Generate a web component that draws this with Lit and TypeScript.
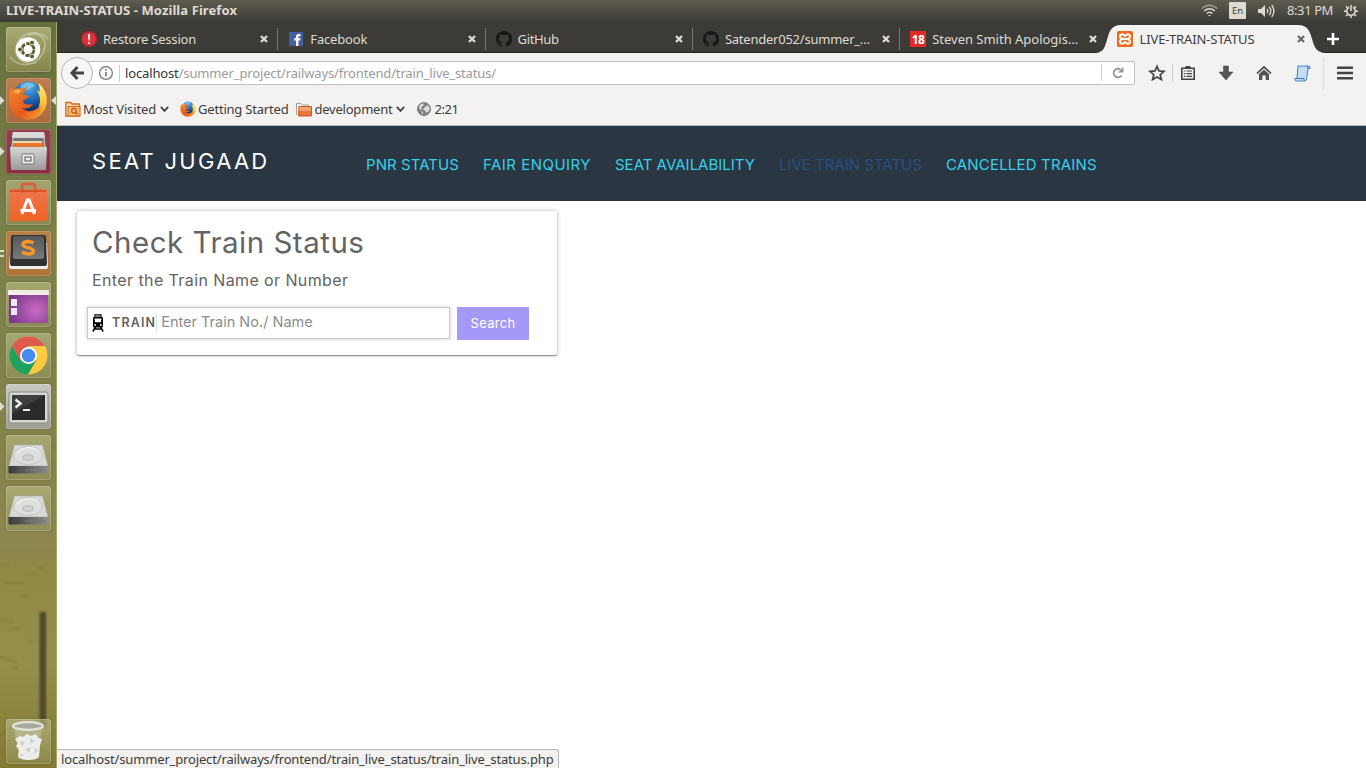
import { LitElement, html, css, svg } from "lit";
import { customElement } from "lit/decorators.js";

const octocat = svg`<path fill="#181716" d="M8 0C3.58 0 0 3.58 0 8c0 3.54 2.29 6.53 5.47 7.59.4.07.55-.17.55-.38v-1.49c-2.01.37-2.53-.49-2.69-.94-.09-.23-.48-.94-.82-1.13-.28-.15-.68-.52-.01-.53.63-.01 1.08.58 1.23.82.72 1.21 1.87.87 2.33.66.07-.52.28-.87.51-1.07-1.78-.2-3.64-.89-3.64-3.95 0-.87.31-1.59.82-2.15-.08-.2-.36-1.02.08-2.12 0 0 .67-.21 2.2.82a7.6 7.6 0 0 1 4 0c1.53-1.04 2.2-.82 2.2-.82.44 1.1.16 1.92.08 2.12.51.56.82 1.27.82 2.15 0 3.07-1.87 3.75-3.65 3.95.29.25.54.73.54 1.48v2.2c0 .21.15.46.55.38A8 8 0 0 0 16 8c0-4.42-3.58-8-8-8z"/>`;

const fox = svg`
  <circle cx="20.500" cy="17" r="15.500" fill="url(#globe)"/>
  <path fill="#8fd0f2" opacity=".6" d="M13 5c5-3 11-3 14 0-1 3-4 2-5 4-2 1-3 2-6 1-2-1-4-2-3-5z"/>
  <path fill="url(#tail)" d="M30 3C37 8 40 16 38.500 24 37 33 30 39 20 39.500 27 36 31 31 31 26 33 20 32 15 28.500 10L31.500 12C32 9 31.500 6 30 3z"/>
  <path fill="url(#fire)" d="M3 6C3 8 3.500 9 5 10 8 8 12 8 14 9L19 7C18 11 16 13 14 14L21 16C20 19 16 19 15 21 16 25 20 25 25 24 22 28.500 18 29 14 28 19 33 28 32 32.500 25 34 33 27 39.500 20 39.500 9 39.500 1 31 1 20 1 14 2 9 3 6z"/>
  <path fill="#f9b04a" d="M5 12c3-3 6-3 9-2-2 1-3 2-3 4-2-1-4-1-6-2z"/>`;

const TABS = [
  { t: "Restore Session", k: "t1", icon: svg`<circle cx="8" cy="8" r="8" fill="#d8323a"/><circle cx="8" cy="8" r="7.4" fill="none" stroke="#9e1b24"/><path d="M7 3h2l-.4 6.5H7.4z" fill="#fff"/><circle cx="8" cy="12" r="1.1" fill="#fff"/>` },
  { t: "Facebook", k: "t2", icon: svg`<rect x="1" y="1" width="14" height="14" fill="#4560a0"/><path fill="#fff" d="M8 15V9.5H6.3V7.3H8V5.8C8 3.9 9.1 3 10.7 3h1.8v2.2h-1.1c-.8 0-1 .4-1 1v1.1h2.1l-.3 2.2h-1.8V15z"/>` },
  { t: "GitHub", k: "t3", icon: octocat },
  { t: "Satender052/summer_…", k: "t4", icon: octocat },
  { t: "Steven Smith Apologis…", k: "t5", icon: svg`<rect width="16" height="16" fill="#e32a23"/><text x="8" y="12.6" class="n18" text-anchor="middle">18</text>` },
  { t: "LIVE-TRAIN-STATUS", k: "t6", icon: svg`<rect width="16" height="16" rx="1.500" fill="#ee6b1c"/><path fill="none" stroke="#fff" stroke-width="2" d="M6 8C1 7 3 2.500 6 3.500L8 5l2-1.500c3-1 5 3.500 0 4.500 5 1 3 5.500 0 4.500L8 11l-2 1.500C3 13.500 1 9 6 8zM6 8h4"/>` },
];

const NAV: [string, string][] = [
  ["PNR STATUS", "n1"], ["FAIR ENQUIRY", "n2"], ["SEAT AVAILABILITY", "n3"],
  ["LIVE TRAIN STATUS", "n4"], ["CANCELLED TRAINS", "n5"],
];

const disk = svg`
  <path d="M8.500 10h28L42 31H3z" fill="#d9d9d7" stroke="#a9a9a6" stroke-width=".6"/>
  <path d="M2.500 31h40v6.500q0 1-1 1h-38q-1 0-1-1z" fill="url(#dk)"/>
  <ellipse cx="22" cy="20.500" rx="14.500" ry="9" fill="#dfdfdd" stroke="#bcbcba" stroke-width=".8"/>
  <ellipse cx="22" cy="22.500" rx="5.500" ry="2.800" fill="#d2d2d0" stroke="#aaa" stroke-width=".8"/>
  <path d="M11 18c5-6 15-7 21-3" stroke="#f4f4f4" fill="none" stroke-width="1.200"/><path d="M19 35h22" stroke="#777" stroke-dasharray="1 1" stroke-width="2"/>`;

const LAUNCH = [
  { c: "olive", l: "", icon: svg`<path d="M4 30C14 42 34 40 39 20 40 10 32 5 22 8M42 12C32 2 14 4 10 20c-2 12 8 18 20 16" stroke="#fff" stroke-width="1.500" opacity=".35" fill="none"/><circle cx="22" cy="22.500" r="12.200" fill="#fdfdfb"/><circle cx="22" cy="22.500" r="6" fill="none" stroke="#5d5a30" stroke-width="2.800" stroke-dasharray="11.200 1.360" stroke-dashoffset="-.7"/><g fill="#5d5a30" stroke="#fdfdfb" stroke-width=".8"><circle cx="14" cy="22.500" r="2.400"/><circle cx="26" cy="15.600" r="2.400"/><circle cx="26" cy="29.400" r="2.400"/></g>` },
  { c: "rust", l: "both", icon: svg`<g transform="translate(2 2)">${fox}</g>` },
  { c: "wine", l: "one", icon: svg`<path d="M7 3h31l2 17H5z" fill="#b9b9b7"/><path d="M8 4h29l1 14H7z" fill="#747472"/><path d="M7 3h31l1 6H6z" fill="#d9d9d7"/><path d="M8 14h29v5H7z" fill="#e5762d"/><path d="M7 12h29v2H7z" fill="#f4d9b8"/><path d="M4 18h37l-1 22q0 1-1 1H6q-1 0-1-1z" fill="url(#dr)"/><rect x="16" y="25" width="12" height="10" rx="1" fill="#ececea" stroke="#777"/><rect x="19" y="28" width="6" height="4" fill="none" stroke="#555"/>` },
  { c: "plain", l: "", icon: svg`<path d="M3 9h38v30q0 2-2 2H5q-2 0-2-2z" fill="url(#bag)"/><path d="M16 13V6q0-2 2-2h9q2 0 2 2v7" fill="none" stroke="#d9603f" stroke-width="3"/><path d="M4 11h36" stroke="#d35428" stroke-width="2"/><path d="M16 34l5.200-14h2L28.500 34M14.500 30.500h15.500" fill="none" stroke="#fff" stroke-width="3"/>` },
  { c: "amber", l: "two", icon: svg`<path d="M5 12h36l1 24q0 2-2 2H5q-2 0-2-2z" fill="#efefed"/><path d="M7 4h31q2 0 2 2l1 26q0 3-2 3H6q-2 0-2-3L5 6q0-2 2-2z" fill="#303133"/><rect x="7" y="5" width="31" height="23" rx="2" fill="url(#key)"/><path d="M27.500 12c-5-3-11-1-10.500 2s10.500 2.500 10.500 6-6.500 4-11.500 1" fill="none" stroke="#f5962b" stroke-width="3.400"/>` },
  { c: "plain", l: "", icon: svg`<rect x="3" y="9" width="39" height="32" rx="1.500" fill="url(#pur)"/><path d="M2 8h41v5H2z" fill="#f0eee4"/><path d="M5 17h6v7H5zM5 26h6v7H5z" fill="#f4e9f3"/>` },
  { c: "plain", l: "", icon: svg`<circle cx="22.500" cy="22.500" r="19" fill="#fbca43"/><path d="M22.500 13H39A19 19 0 0 0 6 13l8.300 14.200z" fill="#dd5a4e"/><path d="M6 13a19 19 0 0 0 16 28.500l8.300-14.300H22.500L14.300 27.200z" fill="#1fa05c"/><circle cx="22.500" cy="22.500" r="8.500" fill="#fff"/><circle cx="22.500" cy="22.500" r="6.800" fill="#4889f2"/>` },
  { c: "steel", l: "one", icon: svg`<rect x="3" y="8" width="39" height="31" rx="2" fill="#d4d4d1" stroke="#8c8c88"/><rect x="6" y="11" width="33" height="25" fill="#2b2c2a"/><path d="M6 11h33L6 30z" fill="#3d3f3c"/><path d="M9.500 15.500l5 4-5 4" fill="none" stroke="#eee" stroke-width="2.500"/><path d="M17 26h7" stroke="#eee" stroke-width="2"/>` },
  { c: "plain", l: "", icon: disk },
  { c: "plain", l: "", icon: disk },
];

const trash = svg`<path d="M8 8h28l-4 30q-1 3-9.500 3T13 38z" fill="#c9c9ba" opacity=".5"/><path d="M9 20l5-3 3 1 4-3 4 2 5-2 2 4 4 1-2 6-1 12q-3 3-10.500 3T12 38l1-7-3-4 2-3z" fill="#ededeb"/><path d="M14 22l5 1-3 5zM24 19l5 3-5 3zM19 30l6-2-2 6zM29 28l3 4-4 3zM14 34l4 2-3 2z" fill="#cfcfcb"/><ellipse cx="22" cy="7" rx="15" ry="3.800" fill="#aaa99a" stroke="#e3e3de" stroke-width="2.200"/>`;

@customElement("app-root")
export class AppRoot extends LitElement {
  static styles = css`
    :host { display: flex; flex-direction: column; position: relative; width: 1366px; height: 768px; overflow: hidden; background: #fff; font: 13px/18px "Noto Sans", "Open Sans", sans-serif; color: #3c3c3c; }
    * { box-sizing: border-box; }
    svg { display: block; flex: none; overflow: visible; }
    span { white-space: nowrap; }
    .panel { height: 22px; flex: none; display: flex; align-items: center; padding: 0 8px 0 6px; background: linear-gradient(#5e5b50, #3c3b37); color: #dfdbd2; }
    .title { font-weight: 700; letter-spacing: .087px; margin-top: -2px; }
    .tray { margin-left: auto; display: flex; align-items: center; margin-top: -1px; }
    .wifi { margin-right: 11px; }
    .lang { width: 17px; height: 17px; background: #dfdbd2; color: #3c3b37; font-size: 9.5px; line-height: 17px; text-align: center; border-radius: 1px; margin-right: 12px; }
    .vol { margin-right: 12px; }
    .clock { margin-right: 11px; letter-spacing: -.404px; margin-top: -1px; }
    .body { flex: 1; display: flex; min-height: 0; }
    .launcher { width: 57px; flex: none; display: flex; flex-direction: column; gap: 6px; padding: 5px 0 4px 6px; border-right: 1px solid #a5a765; background: url("data:image/svg+xml,%3Csvg xmlns='http://www.w3.org/2000/svg' width='57' height='746'%3E%3Cdefs%3E%3Cfilter id='b'%3E%3CfeGaussianBlur stdDeviation='.8'/%3E%3C/filter%3E%3C/defs%3E%3Cg filter='url(%23b)'%3E%3Crect x='39.500' y='590' width='6.500' height='115' fill='%23504b2b'/%3E%3Cpath d='M0 527h57' stroke='%23767340' opacity='.5'/%3E%3Cpath d='M0 543h9M24 552h12M4 561h20M38 546h8M0 597l14 3M8 608l12-2M28 620h6M0 635l17 5M12 646h6M20 574h9M0 712l16-8' stroke='%2376662e' stroke-width='2' fill='none' opacity='.4'/%3E%3Cpath d='M10 28q16 32 42 18' stroke='%23535f35' fill='none' stroke-width='4' opacity='.6'/%3E%3C/g%3E%3C/svg%3E"), linear-gradient(#66713f, #7b8049 28%, #85834c 60%, #8d884f 70%, #8f8a46 73%, #958f4b 86%, #817a33); }
    .slot { width: 45px; height: 45px; flex: none; position: relative; }
    .tile { width: 45px; height: 45px; border-radius: 3px; box-shadow: inset 0 0 0 1px #ffffff30, 0 0 2px #4d4d2780; background: linear-gradient(#c0c08c99, #9b9b6466); }
    .olive { background: linear-gradient(#a9aa74, #85864b); }
    .rust { background: linear-gradient(#bd7d50, #ad6b3d); }
    .wine { background: linear-gradient(#94404c, #87303f); }
    .amber { background: linear-gradient(#b98149, #ad7337); }
    .steel { background: linear-gradient(#c9c9c2, #9d9d94); }
    .mark { position: absolute; left: -6px; top: 18px; }
    .markr { position: absolute; right: -5px; top: 18px; }
    .bin { margin-top: auto; }
    .win { flex: 1; min-width: 0; display: flex; flex-direction: column; }
    .strip { height: 31px; flex: none; display: flex; padding-left: 14px; background: #3c3b37; border-bottom: 1px solid #2b2623; color: #dfdbd2; }
    .tab { width: 207.3px; height: 30px; flex: none; display: flex; align-items: center; padding: 4px 10px 0 10px; position: relative; }
    .tab svg, .tab span { position: relative; }
    .tab span { margin-left: 6px; }
    .tab .x { margin-left: auto; }
    .t1 { letter-spacing: -.214px; }
    .t2 { letter-spacing: -.16px; }
    .t3 { letter-spacing: -.365px; }
    .t4 { letter-spacing: -.233px; }
    .t5 { letter-spacing: -.012px; }
    .t6 { letter-spacing: -.102px; }
    .sep::after { content: ""; width: 1px; height: 22px; background: #7b7974; position: absolute; right: 0; top: 6px; }
    .on { color: #3c3c3c; }
    .tab .shape { position: absolute; left: -12px; top: 3px; }
    .plus { margin: 11px 0 0 12px; }
    .n18 { font: 700 12px "Open Sans", sans-serif; fill: #fff; letter-spacing: -.5px; }
    .bar { height: 41px; flex: none; display: flex; align-items: center; background: #f4f2f1; }
    .back { width: 32px; height: 32px; border: 1px solid #b9b6b2; border-radius: 50%; background: #f7f6f5; margin-left: 4px; margin-top: -1px; z-index: 1; display: grid; place-items: center; flex: none; }
    .url { width: 1053px; height: 24px; flex: none; margin: -1px 0 0 -11px; background: #fff; border: 1px solid #c3c0bd; display: flex; align-items: center; padding-left: 16px; border-radius: 0 2px 2px 0; color: #9b9b9b; }
    .url b { font-weight: 400; color: #333; }
    .addr { letter-spacing: -.141px; }
    .vl { width: 1px; height: 17px; background: #ccc; margin: 0 5px 0 6px; }
    .re { margin-left: auto; border-left: 1px solid #ccc; height: 16px; width: 33px; display: grid; place-items: center; }
    .tools { flex: 1; display: flex; align-items: center; padding-left: 14px; margin-top: -1px; }
    .g1 { width: 1px; height: 18px; background: #cfccc9; margin: 0 7px 0 7px; }
    .g2 { width: 1px; height: 33px; background: #dcd9d6; margin: 0 13px 0 12px; }
    .s1 { margin-left: 22px; }
    .marks { height: 31px; flex: none; display: flex; align-items: center; background: #f4f2f1; padding: 0 0 1px 8px; }
    .marks span { margin: -1px 4px 0 2px; }
    .marks .m2 { margin-right: 8px; letter-spacing: -.2px; }
    .marks .m4 { margin-left: 3px; letter-spacing: -.449px; }
    .m1 { letter-spacing: -.143px; }
    .m3 { letter-spacing: -.222px; }
    .mf { margin-left: 11px; }
    .mg { margin-left: 12px; }
    .page { flex: 1; background: #fff; font-family: "Inter", sans-serif; color: #636363; display: flex; flex-direction: column; align-items: flex-start; }
    .head { align-self: stretch; height: 76px; border-top: 1px solid #b5c0bb; background: #2b3643; display: flex; align-items: center; padding-left: 35px; }
    .brand { font-size: 22px; line-height: 30px; color: #fff; width: 274px; margin-bottom: 5px; letter-spacing: 2.28px; }
    .links { display: flex; gap: 24px; font-size: 15px; color: #35d0ea; padding-top: 2px; }
    .n1 { letter-spacing: .066px; }
    .n2 { letter-spacing: .483px; }
    .n4 { color: #26507f; }
    .n5 { letter-spacing: .19px; }
    .card { width: 480px; height: 144px; margin: 10px 0 0 20px; border-radius: 2px; box-shadow: 0 0 4px #0000004d, 0 1px 1px #00000060; padding: 13px 0 0 10px; display: flex; flex-direction: column; }
    .h { font-size: 29.5px; line-height: 36px; padding-left: 5px; letter-spacing: .5px; }
    .p { font-size: 16px; line-height: 20px; padding: 10px 0 0 5px; letter-spacing: .4px; }
    .form { display: flex; margin-top: 17px; gap: 7px; }
    .field { width: 363px; height: 32px; border: 1px solid #c9c9c9; box-shadow: 0 0 4px #00000030; display: flex; align-items: center; padding-left: 4px; }
    .lab { font-size: 12.5px; font-weight: 600; margin-left: 8px; letter-spacing: 1.15px; margin-bottom: 1px; }
    .fv { width: 1px; height: 20px; background: #e2e2e2; margin-right: 4px; }
    .ph { font-size: 14.5px; color: #8d8d8d; margin-bottom: 2px; }
    .btn { width: 72px; height: 33px; background: #a499f8; color: #fff; font-size: 13px; line-height: 33px; text-align: center; letter-spacing: .31px; }
    .status { position: absolute; left: 57px; bottom: 0; height: 19px; width: 502px; background: #f2f1f0; border: 1px solid #bab8b5; border-left: 0; border-bottom: 0; border-radius: 0 3px 0 0; padding-left: 4px; line-height: 19px; letter-spacing: -.152px; }
  `;

  mark(right = false, cls = "mark") {
    return html`<svg class=${cls} width="5" height="9" viewBox="0 0 5 9"><path d=${right ? "M5 0v9L0 4.500z" : "M0 0v9l4.500-4.500z"} fill="#dcdcd4"/></svg>`;
  }

  chevron() {
    return html`<svg width="9" height="6" viewBox="0 0 9 6"><path d="M.8.8L4.500 4.800 8.200.8" fill="none" stroke="#444" stroke-width="1.800"/></svg>`;
  }

  defs() {
    return svg`<defs>
      <radialGradient id="globe" cx=".5" cy=".15" r=".8"><stop stop-color="#5ab0e6"/><stop offset=".6" stop-color="#1c62b0"/><stop offset="1" stop-color="#0e2f66"/></radialGradient>
      <linearGradient id="fire" x2="1" y2="1"><stop stop-color="#f08a2b"/><stop offset=".6" stop-color="#e65a1e"/><stop offset="1" stop-color="#f8a02d"/></linearGradient>
      <linearGradient id="tail" x2="0" y2="1"><stop stop-color="#fdf07a"/><stop offset=".5" stop-color="#fcc937"/><stop offset="1" stop-color="#f0842a"/></linearGradient>
      <linearGradient id="dk"><stop stop-color="#3a3a3a"/><stop offset="1" stop-color="#8e8e8c"/></linearGradient>
      <linearGradient id="dr" x2="0" y2="1"><stop stop-color="#d5d5d3"/><stop offset="1" stop-color="#9b9b99"/></linearGradient>
      <linearGradient id="bag" x2="0" y2="1"><stop stop-color="#ef7550"/><stop offset="1" stop-color="#ee6424"/></linearGradient>
      <linearGradient id="key" x2="0" y2="1"><stop stop-color="#56585b"/><stop offset="1" stop-color="#77797b"/></linearGradient>
      <radialGradient id="pur" cx=".7" cy=".6" r=".8"><stop stop-color="#c76bc0"/><stop offset="1" stop-color="#74318a"/></radialGradient>
    </defs>`;
  }

  render() {
    return html`
      <div class="panel">
        <span class="title">LIVE-TRAIN-STATUS - Mozilla Firefox</span>
        <div class="tray">
          <svg class="wifi" width="17" height="13" viewBox="0 0 17 13" fill="none" stroke="#dfdbd2" stroke-width="1.500"><path d="M.8 4.500Q8.500-1.800 16.200 4.500" opacity=".55"/><path d="M3.200 7Q8.500 2.500 13.800 7M5.600 9.500q2.900-2.600 5.800 0"/><path d="M7 11h3l-1.500 1.500z" fill="#dfdbd2" stroke="none"/></svg>
          <div class="lang">En</div>
          <svg class="vol" width="17" height="14" viewBox="0 0 17 14" fill="none" stroke="#dfdbd2" stroke-width="1.300"><path d="M0 5h3l4-4v12L3 9H0z" fill="#dfdbd2" stroke="none"/><path d="M9 5q1.500 2 0 4M11.300 3q3 4 0 8M13.700 1q4.500 6 0 12"/></svg>
          <span class="clock">8:31 PM</span>
          <svg width="14" height="14" viewBox="0 0 14 14" fill="none" stroke="#dfdbd2"><path d="M5 3.200a4.300 4.300 0 1 0 4 0" stroke-width="1.600"/><path d="M7 1v6M0 7.200h2.500M11.500 7.200H14M2 12l2-2M12 12l-2-2M2 2.200l2 2M12 2.200l-2 2M7 14v-2.500" stroke-width="1.500"/></svg>
        </div>
      </div>
      <div class="body">
        <div class="launcher">
          ${LAUNCH.map((a) => html`<div class="slot"><div class="tile ${a.c}">
            <svg width="45" height="45" viewBox="0 0 45 45">${this.defs()}${a.icon}</svg></div>
            ${a.l === "one" || a.l === "both" ? this.mark() : ""}
            ${a.l === "both" ? this.mark(true, "markr") : ""}
            ${a.l === "two" ? html`<svg class="mark" width="5" height="9" viewBox="0 0 5 9"><path d="M0 2h4M0 7h4" stroke="#dcdcd4" stroke-width="2"/></svg>` : ""}
          </div>`)}
          <div class="slot bin"><div class="tile plain"><svg width="45" height="45" viewBox="0 0 45 45">${trash}</svg></div></div>
        </div>
        <div class="win">
          <div class="strip">
            ${TABS.map((t, i) => html`<div class="tab ${i === 5 ? "on" : i === 4 ? "" : "sep"}">
              ${i === 5 ? html`<svg class="shape" width="231" height="28" viewBox="0 0 231 28"><path fill="#f4f2f1" d="M0 28C9 28 10 21 12 15 14 7 16 0 26 0H203C213 0 215 7 217 14 219 21 221 28 231 28z"/></svg>` : ""}
              <svg width="16" height="16" viewBox="0 0 16 16">${t.icon}</svg>
              <span class=${t.k}>${t.t}</span>
              <svg class="x" width="8" height="8" viewBox="0 0 8 8"><path d="M1 1l6 6M7 1L1 7" stroke=${i === 5 ? "#6b6966" : "#dfdbd2"} stroke-width="2.300"/></svg>
            </div>`)}
            <svg class="plus" width="12" height="12" viewBox="0 0 12 12"><path d="M6 0v12M0 6h12" stroke="#fff" stroke-width="2.600"/></svg>
          </div>
          <div class="bar">
            <div class="back"><svg width="14" height="14" viewBox="0 0 14 14"><path d="M7.500 1L2 7l5.500 6M2.500 7H14" fill="none" stroke="#444" stroke-width="3"/></svg></div>
            <div class="url">
              <svg width="14" height="14" viewBox="0 0 14 14" fill="none" stroke="#737373"><circle cx="7" cy="7" r="6.400" stroke-width="1.200"/><path d="M7 6v4.500M7 3v1.700" stroke-width="1.600"/></svg>
              <i class="vl"></i>
              <span class="addr"><b>localhost</b>/summer_project/railways/frontend/train_live_status/</span>
              <div class="re"><svg width="12" height="12" viewBox="0 0 12 12"><path d="M9.500 8.500A4.300 4.300 0 1 1 8.500 2.500" fill="none" stroke="#8e979e" stroke-width="1.900"/><path d="M11.500 0v5.500H6z" fill="#8e979e"/></svg></div>
            </div>
            <div class="tools">
              <svg width="16" height="16" viewBox="0 0 16 16"><path d="M8 1.300l2 4.600 5 .5-3.800 3.300 1.200 4.900L8 12l-4.400 2.600 1.200-4.900L1 6.400l5-.5z" fill="none" stroke="#444" stroke-width="1.700"/></svg>
              <i class="g1"></i>
              <svg width="16" height="16" viewBox="0 0 16 16"><path d="M1.800 3.300h12.400v10.900H1.800z" fill="none" stroke="#444" stroke-width="1.600"/><path d="M4.500 3.500L6 1h4l1.500 2.500z" fill="#444"/><path d="M3.800 6h1.500M6.500 6H12M3.800 8.700h1.500M6.500 8.700H12M3.800 11.400h1.500M6.500 11.400H12" stroke="#444" stroke-width="1.200"/></svg>
              <svg class="s1" width="16" height="16" viewBox="0 0 16 16"><path d="M5.500 1h5v6H15l-7 8-7-8h4.500z" fill="#555" stroke="#444" stroke-width=".5"/></svg>
              <svg class="s1" width="16" height="16" viewBox="0 0 16 16"><path d="M1 8.500L8 2l7 6.500" fill="none" stroke="#444" stroke-width="1.700"/><path d="M3 9l5-4.600L13 9v6H9.700v-4.500H6.300V15H3z" fill="#555"/></svg>
              <svg class="s1" width="17" height="17" viewBox="0 0 17 17"><path d="M4 1h10q2 0 2 2.500h-2L12.500 14q-.3 2-2 2H2q-1.500-.5-1-2.500h2z" fill="#c5dcf5" stroke="#4c86c6" stroke-width="1.100"/><path d="M14 3.500q0-2-1.500-2.300M1.500 13.500h8.300q0 2 1 2.500" fill="none" stroke="#3874b8"/></svg>
              <i class="g2"></i>
              <svg width="16" height="14" viewBox="0 0 16 14"><path d="M0 1.800h16M0 7h16M0 12.200h16" stroke="#444" stroke-width="2.400"/></svg>
            </div>
          </div>
          <div class="marks">
            <svg width="16" height="16" viewBox="0 0 16 16"><path d="M.8 3V1.500h5L7 3h7.500v12H.8z" fill="#f4d7b8" stroke="#d66a14" stroke-width="1.300"/><rect x="3" y="5.500" width="12" height="9.500" fill="#f6b877" stroke="#d66a14"/><circle cx="9" cy="9.700" r="2.400" fill="none" stroke="#c65a0a" stroke-width="1.200"/><path d="M10.800 11.500l2 2" stroke="#c65a0a" stroke-width="1.300"/></svg>
            <span class="m1">Most Visited</span>
            ${this.chevron()}
            <svg class="mf" width="16" height="16" viewBox="0 0 40 40">${fox}</svg>
            <span class="m2">Getting Started</span>
            <svg width="16" height="15" viewBox="0 0 16 15"><path d="M.5 13V1.500h4.500L6.500 3h6v2" fill="#f4f4f2" stroke="#a4a29e"/><path d="M3 4.500h12.500v9.500H2.500z" fill="#e8743a" stroke="#cf5a22"/><path d="M3.500 5h11.500v4H3z" fill="#f2a36f"/></svg>
            <span class="m3">development</span>
            ${this.chevron()}
            <svg class="mg" width="14" height="14" viewBox="0 0 14 14"><circle cx="7" cy="7" r="6.500" fill="#828282" stroke="#777"/><path d="M2 4q2-3 5-2.500L6 4 4 5l1 2-2 1zM8 5l3-2 2 4-2 3-2 .5-1-2-2-1zM4 9l2 1v3z" fill="#ddd"/></svg>
            <span class="m4">2:21</span>
          </div>
          <div class="page">
            <div class="head">
              <div class="brand"><span>SEAT JUGAAD</span></div>
              <div class="links">${NAV.map(([t, k]) => html`<span class=${k}>${t}</span>`)}</div>
            </div>
            <div class="card">
              <div class="h">Check Train Status</div>
              <div class="p">Enter the Train Name or Number</div>
              <div class="form">
                <div class="field">
                  <svg width="12" height="18" viewBox="0 0 12 18"><path d="M3 2.500V.8h6v1.700" fill="none" stroke="#000" stroke-width="1.200"/><path d="M3 2.500h6q2 0 2 2V12q0 1.500-1.500 1.500h-7Q1 13.500 1 12V4.500q0-2 2-2z" fill="#000"/><path d="M2.500 4.500h7l-.6 3.800H3.100z" fill="#fff"/><circle cx="3.200" cy="11" r=".9" fill="#fff"/><circle cx="8.800" cy="11" r=".9" fill="#fff"/><path d="M3.500 13l-2.700 4.500M8.500 13l2.700 4.500M2.500 15h7" stroke="#000" stroke-width="1.500"/></svg>
                  <span class="lab">TRAIN</span><i class="fv"></i><span class="ph">Enter Train No./ Name</span>
                </div>
                <div class="btn">Search</div>
              </div>
            </div>
          </div>
        </div>
      </div>
      <div class="status"><span>localhost/summer_project/railways/frontend/train_live_status/train_live_status.php</span></div>
    `;
  }
}
